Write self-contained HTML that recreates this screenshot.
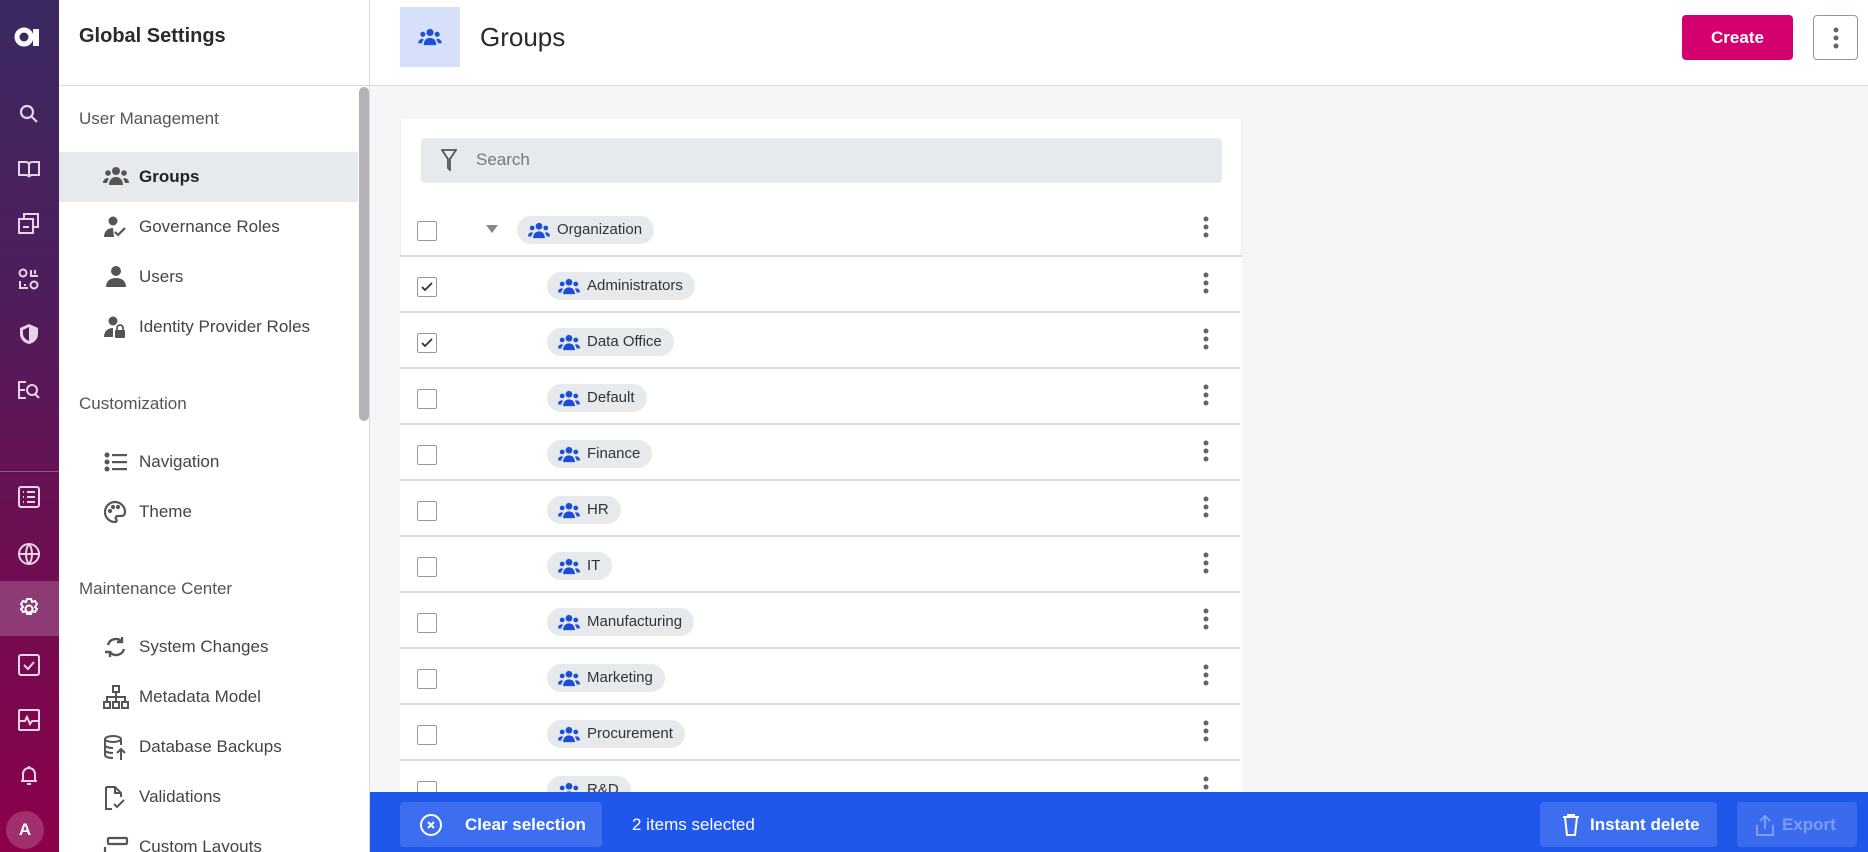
<!DOCTYPE html>
<html><head><meta charset="utf-8"><style>
*{box-sizing:border-box;margin:0;padding:0}
html{width:1868px;height:852px;overflow:hidden}
body{width:1868px;height:852px;overflow:hidden;font-family:"Liberation Sans",sans-serif;background:#f5f6f8;position:relative;color:#222}
.rail{position:absolute;left:0;top:0;width:59px;height:852px;background:linear-gradient(180deg,#3a2961 0%,#4f1d5c 35%,#6a1053 60%,#8b0049 100%)}
.ri{position:absolute;left:17px;width:24px;height:24px}
.side{position:absolute;left:59px;top:0;width:311px;height:852px;background:#fff;border-right:1px solid #d5dbe1;overflow:hidden}
.side .hd{height:86px;border-bottom:1px solid #d5dbe1;padding:25px 0 0 20px;font-size:20px;font-weight:bold;color:#2a2a2a}
.sec{position:absolute;left:20px;font-size:17px;color:#555}
.it{position:absolute;left:0;width:299px;height:50px;font-size:17px;color:#444;padding-left:80px;line-height:50px}
.it svg{position:absolute;left:44px;top:13px}
.it.act{background:#e6eaed;color:#222;font-weight:bold}
.scroll{position:absolute;left:300px;top:87px;width:10px;height:334px;background:#b2b2b7;border-radius:5px}
.main{position:absolute;left:370px;top:0;width:1498px;height:86px;background:#fff;border-bottom:1px solid #d5dbe1}
.card{position:absolute;left:400px;top:117px;width:842px;height:700px;background:#fff;border:1px solid #eef0f2;border-radius:4px}
.search{position:absolute;left:20px;top:20px;width:801px;height:45px;background:#e6eaed;border-radius:4px;font-size:17px;color:#777;padding:12px 0 0 55px}
.row{position:absolute;left:0;width:840px;height:56px;border-bottom:2px solid #d3d9df}
.cb{position:absolute;left:17px;top:20px;width:20px;height:20px;border:1px solid #999;border-radius:2px;background:#fff}
.chip{position:absolute;top:15px;height:28px;background:#e6eaed;border-radius:14px;padding:0 12px 0 40px;font-size:15px;line-height:28px;color:#333}
.chip svg{position:absolute;left:10px;top:6px}
.keb{position:absolute;left:803px;top:15px}
.bar{position:absolute;left:370px;top:792px;width:1498px;height:60px;background:#1f57eb;color:#fff;font-size:17px;font-weight:bold}
.btn{position:absolute;top:10px;height:45px;background:#3e6ef0;border-radius:4px;line-height:45px}
</style></head><body>
<div class="rail">
<svg style="position:absolute;left:14px;top:27px" width="30" height="20" viewBox="0 0 30 20"><circle cx="10" cy="10" r="7" fill="none" stroke="#fff" stroke-width="5"/><rect x="19" y="2" width="6" height="17" fill="#fff"/></svg>
<svg class="ri" style="top:102px" viewBox="0 0 24 24" fill="none" stroke="#e7d4e6" stroke-width="2.2"><circle cx="10" cy="10" r="6"/><path d="M15 15l5 5"/></svg>
<svg class="ri" style="top:157px" viewBox="0 0 24 24" fill="none" stroke="#e7d4e6" stroke-width="2"><path d="M2 5h7a3 3 0 013 3v12a3 3 0 00-3-2H2zM22 5h-7a3 3 0 00-3 3v12a3 3 0 013-2h7z"/></svg>
<svg class="ri" style="top:211px" viewBox="0 0 24 24" fill="none" stroke="#e7d4e6" stroke-width="2"><rect x="2" y="8" width="14" height="14"/><path d="M7 8V3h14v13h-5M6 16h6"/></svg>
<svg class="ri" style="top:267px" viewBox="0 0 24 24" fill="none" stroke="#e7d4e6" stroke-width="2"><circle cx="6" cy="6" r="3.5"/><circle cx="17" cy="18" r="3.5"/><path d="M14 3v6h7M18 3v4M3 14v7h8M7 18h2"/></svg>
<svg class="ri" style="top:322px" viewBox="0 0 24 24"><path d="M12 2l9 4v6c0 5-4 9-9 10-5-1-9-5-9-10V6z" fill="#e7d4e6"/><path d="M12 5v14c-3-1-6-4-6-7V8z" fill="#4f1d5c"/></svg>
<svg class="ri" style="top:378px" viewBox="0 0 24 24" fill="none" stroke="#e7d4e6" stroke-width="2"><path d="M9 4H2v16h7M2 12h6"/><circle cx="15" cy="12" r="5"/><path d="M18 16l4 4"/></svg>
<div style="position:absolute;left:0;top:471px;width:59px;height:1px;background:#8a5a88"></div>
<svg class="ri" style="top:485px" viewBox="0 0 24 24" fill="none" stroke="#e7d4e6" stroke-width="2"><rect x="2" y="2" width="20" height="20" rx="2"/><path d="M10 7h8M10 12h8M10 17h8M6 7h1M6 12h1M6 17h1"/></svg>
<svg class="ri" style="top:542px" viewBox="0 0 24 24" fill="none" stroke="#e7d4e6" stroke-width="2"><circle cx="12" cy="12" r="10"/><path d="M2 12h20M12 2c-4 5-4 15 0 20M12 2c4 5 4 15 0 20"/></svg>
<div style="position:absolute;left:0;top:581px;width:59px;height:55px;background:#8e3b75"></div>
<svg class="ri" style="top:597px" viewBox="0 0 24 24" fill="none" stroke="#fff" stroke-width="2"><circle cx="12" cy="12" r="3.5"/><path d="M10 2h4l1 3 3-1 2 3-2 3 2 2-2 3-3-1-1 3h-4l-1-3-3 1-2-3 2-2-2-3 2-3 3 1z"/></svg>
<svg class="ri" style="top:653px" viewBox="0 0 24 24" fill="none" stroke="#e7d4e6" stroke-width="2"><rect x="2" y="2" width="20" height="20" rx="2"/><path d="M7 12l4 4 6-7"/></svg>
<svg class="ri" style="top:708px" viewBox="0 0 24 24" fill="none" stroke="#e7d4e6" stroke-width="2"><rect x="2" y="2" width="20" height="20" rx="1"/><path d="M2 13h6l2-4 3 7 2-3h7"/></svg>
<svg class="ri" style="top:763px" viewBox="0 0 24 24" fill="none" stroke="#e7d4e6" stroke-width="2"><path d="M6 17V11a6 6 0 0112 0v6M4 18h16M12 3v2M10 21h4"/></svg>
<div style="position:absolute;left:6px;top:811px;width:38px;height:38px;border-radius:50%;background:#a12f6e;color:#fff;font-weight:bold;font-size:17px;text-align:center;line-height:38px">A</div>
</div>

<div class="side">
<div class="hd">Global Settings</div>
<div class="sec" style="top:109px">User Management</div>
<div class="it act" style="top:152px"><svg width="26" height="22" viewBox="0 0 26 22" fill="#555"><circle cx="13" cy="6" r="4"/><circle cx="5" cy="8" r="2.8"/><circle cx="21" cy="8" r="2.8"/><path d="M6 20c0-5 3-8 7-8s7 3 7 8zM0 18c0-3 2-5 5-5l1 1c-1 1-2 3-2 4zM26 18c0-3-2-5-5-5l-1 1c1 1 2 3 2 4z"/></svg>Groups</div>
<div class="it" style="top:202px"><svg width="26" height="24" viewBox="0 0 26 24" fill="#555"><circle cx="10" cy="6" r="4.5"/><path d="M1 22c0-6 4-9 9-9l1 9z"/><path d="M12 17l3 3 7-7" stroke="#555" stroke-width="2.2" fill="none"/></svg>Governance Roles</div>
<div class="it" style="top:252px"><svg width="26" height="24" viewBox="0 0 26 24" fill="#555"><circle cx="13" cy="6" r="5"/><path d="M3 22c0-6 4-9 10-9s10 3 10 9z"/></svg>Users</div>
<div class="it" style="top:302px"><svg width="26" height="24" viewBox="0 0 26 24" fill="#555"><circle cx="10" cy="6" r="4.5"/><path d="M1 22c0-6 4-9 9-9v9z"/><rect x="12" y="15" width="10" height="8" rx="1"/><path d="M14 15v-2a3 3 0 016 0v2" stroke="#555" stroke-width="1.8" fill="none"/></svg>Identity Provider Roles</div>
<div class="sec" style="top:394px">Customization</div>
<div class="it" style="top:437px"><svg width="26" height="24" viewBox="0 0 26 24" fill="#555"><circle cx="4" cy="5" r="2.5"/><circle cx="4" cy="12" r="2.5"/><circle cx="4" cy="19" r="2.5"/><rect x="9" y="4" width="15" height="2.2"/><rect x="9" y="11" width="15" height="2.2"/><rect x="9" y="18" width="15" height="2.2"/></svg>Navigation</div>
<div class="it" style="top:487px"><svg width="26" height="24" viewBox="0 0 26 24" fill="none" stroke="#555" stroke-width="2.2"><path d="M12 2a10 10 0 100 20c2 0 2-2 1-3s0-3 2-3h3c3 0 4-2 4-4 0-6-5-10-10-10z"/><circle cx="7" cy="11" r="1" fill="#555"/><circle cx="10" cy="7" r="1" fill="#555"/><circle cx="15" cy="7" r="1" fill="#555"/></svg>Theme</div>
<div class="sec" style="top:579px">Maintenance Center</div>
<div class="it" style="top:622px"><svg width="26" height="24" viewBox="0 0 26 24" fill="none" stroke="#555" stroke-width="2.4"><path d="M5 10a8 8 0 0114-3M21 14a8 8 0 01-14 3"/><path d="M19 2v5h-5M7 22v-5H2" fill="none"/></svg>System Changes</div>
<div class="it" style="top:672px"><svg width="26" height="24" viewBox="0 0 26 24" fill="none" stroke="#555" stroke-width="2"><rect x="10" y="1" width="6" height="6"/><rect x="1" y="17" width="6" height="6"/><rect x="10" y="17" width="6" height="6"/><rect x="19" y="17" width="6" height="6"/><path d="M13 7v10M4 17v-5h18v5"/></svg>Metadata Model</div>
<div class="it" style="top:722px"><svg width="26" height="26" viewBox="0 0 26 26" fill="none" stroke="#555" stroke-width="2"><ellipse cx="10" cy="4" rx="8" ry="3"/><path d="M2 4v16c0 2 4 3 8 3M18 4v6M2 10c0 2 4 3 8 3M2 15c0 2 4 3 8 3M18 25V14M14 18l4-4 4 4"/></svg>Database Backups</div>
<div class="it" style="top:772px"><svg width="26" height="26" viewBox="0 0 26 26" fill="none" stroke="#555" stroke-width="2"><path d="M3 2h9l6 6v4M3 2v22h6M12 2v6h6M11 19l3 3 7-7"/></svg>Validations</div>
<div class="it" style="top:822px"><svg width="26" height="24" viewBox="0 0 26 24" fill="none" stroke="#555" stroke-width="2.2"><rect x="5" y="3" width="19" height="6" rx="1"/><path d="M2 12v10h22"/></svg>Custom Layouts</div>
<div class="scroll"></div>
</div>

<div class="main">
<div style="position:absolute;left:30px;top:7px;width:60px;height:60px;background:#d7e0fb"></div>
<svg style="position:absolute;left:48px;top:28px" width="24" height="18" viewBox="0 0 26 20" fill="#1d4ed8"><circle cx="13" cy="5" r="4"/><circle cx="5" cy="7" r="2.8"/><circle cx="21" cy="7" r="2.8"/><path d="M6 19c0-5 3-8 7-8s7 3 7 8zM0 17c0-3 2-5 5-5l1 1c-1 1-2 3-2 4zM26 17c0-3-2-5-5-5l-1 1c1 1 2 3 2 4z"/></svg>
<div style="position:absolute;left:110px;top:22px;font-size:26px;color:#2a2a2a">Groups</div>
<div style="position:absolute;left:1312px;top:15px;width:111px;height:45px;background:#d4006d;border-radius:4px;color:#fff;font-weight:bold;font-size:17px;text-align:center;line-height:45px">Create</div>
<div style="position:absolute;left:1443px;top:15px;width:45px;height:45px;border:1px solid #8a99a8;border-radius:4px"><svg style="position:absolute;left:19px;top:11px" width="6" height="22" viewBox="0 0 6 22" fill="#666"><circle cx="3" cy="3" r="2.5"/><circle cx="3" cy="11" r="2.5"/><circle cx="3" cy="19" r="2.5"/></svg></div>
</div>

<div class="card">
<div class="search"><svg style="position:absolute;left:20px;top:11px" width="16" height="22" viewBox="0 0 16 22" fill="none" stroke="#555" stroke-width="1.8"><path d="M1 1h14L9 10v11L7 19V10z"/></svg>Search</div>
</div>
<div style="position:absolute;left:400px;top:117px;width:842px;height:675px;overflow:hidden">
<div class="row" style="top:84px;border:0;height:56px"><div class="cb"></div><div style="position:absolute;left:86px;top:24px;width:0;height:0;border-left:6px solid transparent;border-right:6px solid transparent;border-top:8px solid #888"></div><div class="chip" style="left:117px"><svg width="24" height="17" viewBox="0 0 26 20" fill="#1d4ed8"><circle cx="13" cy="5" r="4"/><circle cx="5" cy="7" r="2.8"/><circle cx="21" cy="7" r="2.8"/><path d="M6 19c0-5 3-8 7-8s7 3 7 8zM0 17c0-3 2-5 5-5l1 1c-1 1-2 3-2 4zM26 17c0-3-2-5-5-5l-1 1c1 1 2 3 2 4z"/></svg>Organization</div><svg class="keb" width="6" height="22" viewBox="0 0 6 22" fill="#666"><circle cx="3" cy="3" r="2.5"/><circle cx="3" cy="11" r="2.5"/><circle cx="3" cy="19" r="2.5"/></svg></div>
<div style="position:absolute;left:0;top:138px;width:842px;height:2px;background:#d3d9df"></div>
</div>
<div style="position:absolute;left:400px;top:257px;width:842px;height:535px;overflow:hidden;background:#fff">
<div class="row" style="top:0"><div class="cb"><svg width="18" height="18" viewBox="0 0 18 18" fill="none" stroke="#333" stroke-width="1.8"><path d="M4 9l3 3 7-7"/></svg></div><div class="chip" style="left:147px"><svg width="24" height="17" viewBox="0 0 26 20" fill="#1d4ed8"><circle cx="13" cy="5" r="4"/><circle cx="5" cy="7" r="2.8"/><circle cx="21" cy="7" r="2.8"/><path d="M6 19c0-5 3-8 7-8s7 3 7 8zM0 17c0-3 2-5 5-5l1 1c-1 1-2 3-2 4zM26 17c0-3-2-5-5-5l-1 1c1 1 2 3 2 4z"/></svg>Administrators</div><svg class="keb" width="6" height="22" viewBox="0 0 6 22" fill="#666"><circle cx="3" cy="3" r="2.5"/><circle cx="3" cy="11" r="2.5"/><circle cx="3" cy="19" r="2.5"/></svg></div>
<div class="row" style="top:56px"><div class="cb"><svg width="18" height="18" viewBox="0 0 18 18" fill="none" stroke="#333" stroke-width="1.8"><path d="M4 9l3 3 7-7"/></svg></div><div class="chip" style="left:147px"><svg width="24" height="17" viewBox="0 0 26 20" fill="#1d4ed8"><circle cx="13" cy="5" r="4"/><circle cx="5" cy="7" r="2.8"/><circle cx="21" cy="7" r="2.8"/><path d="M6 19c0-5 3-8 7-8s7 3 7 8zM0 17c0-3 2-5 5-5l1 1c-1 1-2 3-2 4zM26 17c0-3-2-5-5-5l-1 1c1 1 2 3 2 4z"/></svg>Data Office</div><svg class="keb" width="6" height="22" viewBox="0 0 6 22" fill="#666"><circle cx="3" cy="3" r="2.5"/><circle cx="3" cy="11" r="2.5"/><circle cx="3" cy="19" r="2.5"/></svg></div>
<div class="row" style="top:112px"><div class="cb"></div><div class="chip" style="left:147px"><svg width="24" height="17" viewBox="0 0 26 20" fill="#1d4ed8"><circle cx="13" cy="5" r="4"/><circle cx="5" cy="7" r="2.8"/><circle cx="21" cy="7" r="2.8"/><path d="M6 19c0-5 3-8 7-8s7 3 7 8zM0 17c0-3 2-5 5-5l1 1c-1 1-2 3-2 4zM26 17c0-3-2-5-5-5l-1 1c1 1 2 3 2 4z"/></svg>Default</div><svg class="keb" width="6" height="22" viewBox="0 0 6 22" fill="#666"><circle cx="3" cy="3" r="2.5"/><circle cx="3" cy="11" r="2.5"/><circle cx="3" cy="19" r="2.5"/></svg></div>
<div class="row" style="top:168px"><div class="cb"></div><div class="chip" style="left:147px"><svg width="24" height="17" viewBox="0 0 26 20" fill="#1d4ed8"><circle cx="13" cy="5" r="4"/><circle cx="5" cy="7" r="2.8"/><circle cx="21" cy="7" r="2.8"/><path d="M6 19c0-5 3-8 7-8s7 3 7 8zM0 17c0-3 2-5 5-5l1 1c-1 1-2 3-2 4zM26 17c0-3-2-5-5-5l-1 1c1 1 2 3 2 4z"/></svg>Finance</div><svg class="keb" width="6" height="22" viewBox="0 0 6 22" fill="#666"><circle cx="3" cy="3" r="2.5"/><circle cx="3" cy="11" r="2.5"/><circle cx="3" cy="19" r="2.5"/></svg></div>
<div class="row" style="top:224px"><div class="cb"></div><div class="chip" style="left:147px"><svg width="24" height="17" viewBox="0 0 26 20" fill="#1d4ed8"><circle cx="13" cy="5" r="4"/><circle cx="5" cy="7" r="2.8"/><circle cx="21" cy="7" r="2.8"/><path d="M6 19c0-5 3-8 7-8s7 3 7 8zM0 17c0-3 2-5 5-5l1 1c-1 1-2 3-2 4zM26 17c0-3-2-5-5-5l-1 1c1 1 2 3 2 4z"/></svg>HR</div><svg class="keb" width="6" height="22" viewBox="0 0 6 22" fill="#666"><circle cx="3" cy="3" r="2.5"/><circle cx="3" cy="11" r="2.5"/><circle cx="3" cy="19" r="2.5"/></svg></div>
<div class="row" style="top:280px"><div class="cb"></div><div class="chip" style="left:147px"><svg width="24" height="17" viewBox="0 0 26 20" fill="#1d4ed8"><circle cx="13" cy="5" r="4"/><circle cx="5" cy="7" r="2.8"/><circle cx="21" cy="7" r="2.8"/><path d="M6 19c0-5 3-8 7-8s7 3 7 8zM0 17c0-3 2-5 5-5l1 1c-1 1-2 3-2 4zM26 17c0-3-2-5-5-5l-1 1c1 1 2 3 2 4z"/></svg>IT</div><svg class="keb" width="6" height="22" viewBox="0 0 6 22" fill="#666"><circle cx="3" cy="3" r="2.5"/><circle cx="3" cy="11" r="2.5"/><circle cx="3" cy="19" r="2.5"/></svg></div>
<div class="row" style="top:336px"><div class="cb"></div><div class="chip" style="left:147px"><svg width="24" height="17" viewBox="0 0 26 20" fill="#1d4ed8"><circle cx="13" cy="5" r="4"/><circle cx="5" cy="7" r="2.8"/><circle cx="21" cy="7" r="2.8"/><path d="M6 19c0-5 3-8 7-8s7 3 7 8zM0 17c0-3 2-5 5-5l1 1c-1 1-2 3-2 4zM26 17c0-3-2-5-5-5l-1 1c1 1 2 3 2 4z"/></svg>Manufacturing</div><svg class="keb" width="6" height="22" viewBox="0 0 6 22" fill="#666"><circle cx="3" cy="3" r="2.5"/><circle cx="3" cy="11" r="2.5"/><circle cx="3" cy="19" r="2.5"/></svg></div>
<div class="row" style="top:392px"><div class="cb"></div><div class="chip" style="left:147px"><svg width="24" height="17" viewBox="0 0 26 20" fill="#1d4ed8"><circle cx="13" cy="5" r="4"/><circle cx="5" cy="7" r="2.8"/><circle cx="21" cy="7" r="2.8"/><path d="M6 19c0-5 3-8 7-8s7 3 7 8zM0 17c0-3 2-5 5-5l1 1c-1 1-2 3-2 4zM26 17c0-3-2-5-5-5l-1 1c1 1 2 3 2 4z"/></svg>Marketing</div><svg class="keb" width="6" height="22" viewBox="0 0 6 22" fill="#666"><circle cx="3" cy="3" r="2.5"/><circle cx="3" cy="11" r="2.5"/><circle cx="3" cy="19" r="2.5"/></svg></div>
<div class="row" style="top:448px"><div class="cb"></div><div class="chip" style="left:147px"><svg width="24" height="17" viewBox="0 0 26 20" fill="#1d4ed8"><circle cx="13" cy="5" r="4"/><circle cx="5" cy="7" r="2.8"/><circle cx="21" cy="7" r="2.8"/><path d="M6 19c0-5 3-8 7-8s7 3 7 8zM0 17c0-3 2-5 5-5l1 1c-1 1-2 3-2 4zM26 17c0-3-2-5-5-5l-1 1c1 1 2 3 2 4z"/></svg>Procurement</div><svg class="keb" width="6" height="22" viewBox="0 0 6 22" fill="#666"><circle cx="3" cy="3" r="2.5"/><circle cx="3" cy="11" r="2.5"/><circle cx="3" cy="19" r="2.5"/></svg></div>
<div class="row" style="top:504px"><div class="cb"></div><div class="chip" style="left:147px"><svg width="24" height="17" viewBox="0 0 26 20" fill="#1d4ed8"><circle cx="13" cy="5" r="4"/><circle cx="5" cy="7" r="2.8"/><circle cx="21" cy="7" r="2.8"/><path d="M6 19c0-5 3-8 7-8s7 3 7 8zM0 17c0-3 2-5 5-5l1 1c-1 1-2 3-2 4zM26 17c0-3-2-5-5-5l-1 1c1 1 2 3 2 4z"/></svg>R&amp;D</div><svg class="keb" width="6" height="22" viewBox="0 0 6 22" fill="#666"><circle cx="3" cy="3" r="2.5"/><circle cx="3" cy="11" r="2.5"/><circle cx="3" cy="19" r="2.5"/></svg></div>
</div>

<div class="bar">
<div class="btn" style="left:30px;width:202px"><svg style="position:absolute;left:19px;top:11px" width="24" height="24" viewBox="0 0 24 24" fill="none" stroke="#fff" stroke-width="2"><circle cx="12" cy="12" r="10"/><path d="M9 9l6 6M15 9l-6 6"/></svg><span style="position:absolute;left:65px">Clear selection</span></div>
<div style="position:absolute;left:262px;top:10px;line-height:45px;font-weight:normal">2 items selected</div>
<div class="btn" style="left:1170px;width:177px"><svg style="position:absolute;left:22px;top:12px" width="18" height="22" viewBox="0 0 18 22" fill="none" stroke="#fff" stroke-width="2"><path d="M1 3h16M6 3V1h6v2M3 3l2 18h8l2-18"/></svg><span style="position:absolute;left:50px">Instant delete</span></div>
<div class="btn" style="left:1367px;width:120px;background:#3a6bef;color:#7d9ef5"><svg style="position:absolute;left:18px;top:12px" width="20" height="22" viewBox="0 0 20 22" fill="none" stroke="#7d9ef5" stroke-width="2"><path d="M10 15V2M5 7l5-5 5 5M2 11v10h16V11"/></svg><span style="position:absolute;left:45px">Export</span></div>
</div>
</body></html>
